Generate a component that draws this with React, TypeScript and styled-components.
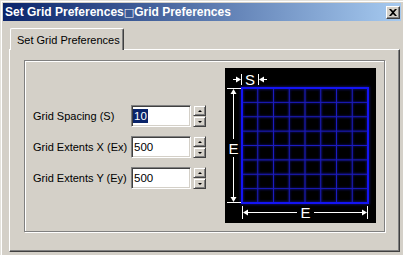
import { Fragment } from 'react';
import styled, { createGlobalStyle } from 'styled-components';

const GlobalStyle = createGlobalStyle`
  html, body {
    margin: 0;
    padding: 0;
    background: #d4d0c8;
  }
  body {
    width: 403px;
    height: 255px;
    overflow: hidden;
    font-family: "Liberation Sans", Arial, sans-serif;
  }
`;

const Window = styled.div`
  width: 403px;
  height: 255px;
  box-sizing: border-box;
  padding: 3px 2px 0 3px;
  background: #d4d0c8;
  box-shadow: inset 1px 1px 0 #e4e2dc, inset 2px 2px 0 #fff;
  display: flex;
  flex-direction: column;
`;

const TitleBar = styled.div`
  height: 18px;
  flex: none;
  display: flex;
  align-items: center;
  justify-content: space-between;
  padding: 0 1px 0 2px;
  background: linear-gradient(to right, #0a246a, #a6caf0);
`;

const Title = styled.span`
  color: #fff;
  font-weight: bold;
  font-size: 12px;
  white-space: nowrap;
`;

const MissingGlyph = styled.span`
  font-family: "DejaVu Sans", sans-serif;
  font-weight: normal;
  font-size: 11px;
`;

const CloseButton = styled.div`
  width: 14px;
  height: 13px;
  box-sizing: border-box;
  display: flex;
  align-items: center;
  justify-content: center;
  background: #d4d0c8;
  border: 1px solid;
  border-color: #fff #404040 #404040 #fff;
  box-shadow: inset -1px -1px 0 #808080;
`;

const Body = styled.div`
  flex: 1;
  display: flex;
  flex-direction: column;
  padding: 7px 1px 3px 6px;
`;

const TabStrip = styled.div`
  display: flex;
  height: 21px;
  position: relative;
  z-index: 1;
`;

const Tab = styled.div`
  width: 114px;
  height: 22px;
  margin-left: 1px;
  box-sizing: border-box;
  display: flex;
  align-items: center;
  padding: 0 0 0 6px;
  font-size: 11px;
  color: #000;
  background: #d4d0c8;
  border-left: 1px solid #fff;
  border-top: 1px solid #fff;
  border-right: 1px solid #404040;
  border-top-left-radius: 2px;
  border-top-right-radius: 2px;
  box-shadow: inset -1px 0 0 #808080;
`;

const Panel = styled.div`
  flex: 1;
  box-sizing: border-box;
  border-left: 1px solid #fff;
  border-top: 1px solid #fff;
  border-right: 1px solid #404040;
  border-bottom: 1px solid #404040;
  box-shadow: inset -1px -1px 0 #808080;
  padding: 10px 0 0 14px;
`;

const GroupBox = styled.div`
  width: 361px;
  height: 172px;
  box-sizing: border-box;
  border: 1px solid #808080;
  box-shadow: inset 1px 1px 0 #fff, 1px 1px 0 #fff;
  display: flex;
  align-items: center;
  justify-content: space-between;
  padding: 0 8px;
`;

const Form = styled.div`
  display: grid;
  grid-template-columns: 96px 60px 13px;
  grid-auto-rows: 22px;
  column-gap: 2px;
  row-gap: 9px;
  align-items: center;
  margin-top: 2px;
`;

const Label = styled.span`
  font-size: 11px;
  color: #000;
  white-space: nowrap;
`;

const Field = styled.div`
  height: 22px;
  box-sizing: border-box;
  background: #fff;
  border: 1px solid;
  border-color: #808080 #fff #fff #808080;
  box-shadow: inset 1px 1px 0 #404040, inset -1px -1px 0 #d4d0c8;
  display: flex;
  align-items: center;
  padding-left: 2px;
  font-size: 11.5px;
  color: #000;
`;

const Selected = styled.span`
  background: #0a246a;
  color: #fff;
  padding: 0 1px;
  margin-left: -1px;
  line-height: 14px;
`;

const Spinner = styled.div`
  display: flex;
  flex-direction: column;
  height: 22px;
`;

const SpinButton = styled.div`
  flex: 1;
  box-sizing: border-box;
  background: #d4d0c8;
  border: 1px solid;
  border-color: #d4d0c8 #404040 #404040 #d4d0c8;
  box-shadow: inset 1px 1px 0 #fff, inset -1px -1px 0 #808080;
  display: flex;
  align-items: center;
  justify-content: center;
`;

const Arrow = styled.span<{ $up?: boolean }>`
  width: 0;
  height: 0;
  border-left: 2px solid transparent;
  border-right: 2px solid transparent;
  ${(p) => (p.$up ? 'border-bottom: 2px solid #000;' : 'border-top: 2px solid #000;')}
`;

const Preview = styled.div`
  width: 151px;
  height: 155px;
  background: #000;
  margin-top: -1px;
  line-height: 0;
`;

const gx0 = 17;
const gx1 = 143;
const gy0 = 20;
const gy1 = 135;

const GridDiagram = () => {
  const cols = Array.from({ length: 7 }, (_, i) => gx0 + ((gx1 - gx0) * (i + 1)) / 8);
  const rows = Array.from({ length: 7 }, (_, i) => gy0 + ((gy1 - gy0) * (i + 1)) / 8);
  const w = '#fff';
  return (
    <svg width="151" height="155" viewBox="0 0 151 155">
      <defs>
        <filter id="glow" x="-10%" y="-10%" width="120%" height="120%">
          <feGaussianBlur stdDeviation="0.8" />
        </filter>
      </defs>
      <g stroke="#1a1ad0" strokeWidth="2" opacity="0.45" filter="url(#glow)">
        {cols.map((x) => (
          <line key={'gc' + x} x1={x} y1={gy0} x2={x} y2={gy1} />
        ))}
        {rows.map((y) => (
          <line key={'gr' + y} x1={gx0} y1={y} x2={gx1} y2={y} />
        ))}
        <rect x={gx0} y={gy0} width={gx1 - gx0} height={gy1 - gy0} fill="none" strokeWidth="3.5" />
      </g>
      <g stroke="#1c1cc0" strokeWidth="1">
        {cols.map((x) => (
          <line key={'c' + x} x1={x} y1={gy0} x2={x} y2={gy1} />
        ))}
        {rows.map((y) => (
          <line key={'r' + y} x1={gx0} y1={y} x2={gx1} y2={y} />
        ))}
      </g>
      <rect x={gx0} y={gy0} width={gx1 - gx0} height={gy1 - gy0} fill="none" stroke="#1414f4" strokeWidth="2" />

      <g stroke={w} strokeWidth="1" fill="none">
        {/* S marker */}
        <line x1="8" y1="11.5" x2="15" y2="11.5" />
        <line x1="16.5" y1="6" x2="16.5" y2="17" />
        <line x1="33.5" y1="6" x2="33.5" y2="17" />
        <line x1="35" y1="11.5" x2="42" y2="11.5" />
        {/* vertical E */}
        <line x1="2" y1={gy0 + 0.5} x2="16" y2={gy0 + 0.5} />
        <line x1="2" y1={gy1 - 0.5} x2="16" y2={gy1 - 0.5} />
        <line x1="8.5" y1={gy0 + 2} x2="8.5" y2="71" />
        <line x1="8.5" y1="89" x2="8.5" y2={gy1 - 2} />
        {/* horizontal E */}
        <line x1="17.5" y1="138" x2="17.5" y2="151" />
        <line x1="142.5" y1="138" x2="142.5" y2="151" />
        <line x1="19" y1="144.5" x2="72" y2="144.5" />
        <line x1="89" y1="144.5" x2="141" y2="144.5" />
      </g>
      <g fill={w}>
        <polygon points="16,11.5 11,8.5 11,14.5" />
        <polygon points="34,11.5 39,8.5 39,14.5" />
        <polygon points={`8.5,${gy0 + 1} 5.5,${gy0 + 6} 11.5,${gy0 + 6}`} />
        <polygon points={`8.5,${gy1 - 1} 5.5,${gy1 - 6} 11.5,${gy1 - 6}`} />
        <polygon points="18,144.5 23,141.5 23,147.5" />
        <polygon points="142,144.5 137,141.5 137,147.5" />
      </g>
      <g fill={w} fontFamily='"Liberation Sans", Arial, sans-serif' fontSize="15" textAnchor="middle">
        <text x="25" y="17">S</text>
        <text x="8.5" y="86">E</text>
        <text x="80.5" y="150">E</text>
      </g>
    </svg>
  );
};

const fields = [
  { label: 'Grid Spacing (S)', value: '10', selected: true },
  { label: 'Grid Extents X (Ex)', value: '500', selected: false },
  { label: 'Grid Extents Y (Ey)', value: '500', selected: false },
];

const App = () => {
  return (
    <Window>
      <GlobalStyle />
      <TitleBar>
        <Title>
          Set Grid Preferences<MissingGlyph>□</MissingGlyph>Grid Preferences
        </Title>
        <CloseButton>
          <svg width="8" height="7" viewBox="0 0 8 7">
            <path d="M0 0 L2 0 L4 2 L6 0 L8 0 L5 3.5 L8 7 L6 7 L4 5 L2 7 L0 7 L3 3.5 Z" fill="#000" />
          </svg>
        </CloseButton>
      </TitleBar>
      <Body>
        <TabStrip>
          <Tab>Set Grid Preferences</Tab>
        </TabStrip>
        <Panel>
          <GroupBox>
            <Form>
              {fields.map((f) => (
                <Fragment key={f.label}>
                  <Label>{f.label}</Label>
                  <Field>{f.selected ? <Selected>{f.value}</Selected> : f.value}</Field>
                  <Spinner>
                    <SpinButton>
                      <Arrow $up />
                    </SpinButton>
                    <SpinButton>
                      <Arrow />
                    </SpinButton>
                  </Spinner>
                </Fragment>
              ))}
            </Form>
            <Preview>
              <GridDiagram />
            </Preview>
          </GroupBox>
        </Panel>
      </Body>
    </Window>
  );
};

export default App;
